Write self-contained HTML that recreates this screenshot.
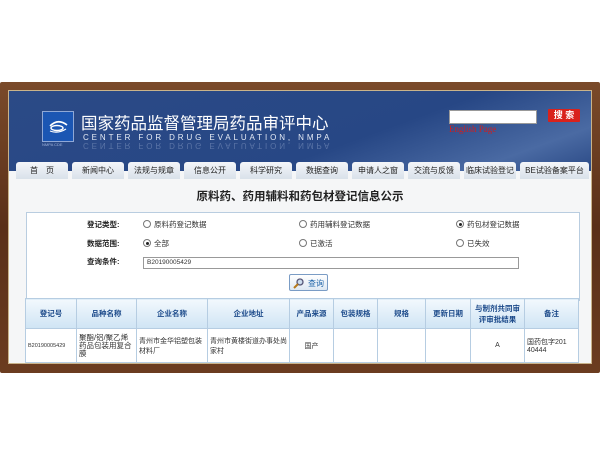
<!DOCTYPE html>
<html><head><meta charset="utf-8"><style>
body{margin:0;width:600px;height:450px;background:#fff;position:relative;overflow:hidden;font-family:"Liberation Sans","Noto Sans CJK SC",sans-serif}
.frame{position:absolute;left:0;top:82px;width:600px;height:291px;background:linear-gradient(180deg,#7a4a2a,#5a3018 50%,#6b3c20);border-radius:2px}
.inner{position:absolute;left:9px;top:91px;width:582px;height:272px;background:#f5f6f7;overflow:hidden;box-shadow:0 0 0 1px #c9b38a}
.hdr{position:absolute;left:0;top:0;width:582px;height:80px;background:linear-gradient(160deg,#2b4a86,#274785 60%,#4a6aa3 85%,#2b4a86)}
.logo{position:absolute;left:33px;top:20px;width:30px;height:29px;background:#1b56b3;border:1px solid #8fa8d6}
.t1{position:absolute;left:72px;top:19px;color:#fff;font-size:16.5px;letter-spacing:0px;white-space:nowrap}
.t2{position:absolute;left:74px;top:42px;color:#e6ecf6;font-size:8px;letter-spacing:2.9px;white-space:nowrap}
.t3{position:absolute;left:74px;top:50px;color:#6f86b4;font-size:8px;letter-spacing:2.9px;transform:scaleY(-1);opacity:.7;white-space:nowrap}
.sin{position:absolute;left:440px;top:19px;width:86px;height:12px;background:#fff;border:1px solid #999}
.sbtn{position:absolute;left:539px;top:18px;width:32px;height:13px;background:#d9221c;color:#fff;font-size:9px;text-align:center;line-height:13px;font-weight:bold;border-radius:1px}
.eng{position:absolute;left:440px;top:33px;color:#d21e1e;font-size:9px;font-family:"Liberation Serif",serif}
.tab{position:absolute;top:71px;width:52px;height:17px;background:linear-gradient(#f4f6f9,#d9e1ea);border-radius:3px 3px 0 0;font-size:8px;text-align:center;line-height:18px;color:#222}
.title{position:absolute;left:0;width:582px;top:97px;text-align:center;font-size:11.5px;font-weight:bold;color:#222}
.form{position:absolute;left:17px;top:121px;width:552px;height:87px;background:#fff;border:1px solid #b9cde0}
.lab{position:absolute;font-size:7.5px;font-weight:bold;color:#222}
.opt{position:absolute;font-size:7.5px;color:#333}
.opt i{display:inline-block;width:6px;height:6px;border:1px solid #777;border-radius:50%;vertical-align:-1px;margin-right:3px;position:relative}
.opt i.on:after{content:"";position:absolute;left:1.5px;top:1.5px;width:3px;height:3px;border-radius:50%;background:#222}
.q{position:absolute;left:116px;top:44px;width:371px;height:10px;border:1px solid #999;font-size:6.5px;line-height:10px;padding-left:3px;color:#333}
.btn{position:absolute;left:262px;top:61px;width:39px;height:17px;border:1px solid #7a9cc5;border-radius:2px;background:linear-gradient(#fff,#dde8f3);font-size:8px;color:#26a;line-height:17px;text-align:right;padding-right:3px;box-sizing:border-box}
table{position:absolute;left:16px;top:207px;border-collapse:collapse;font-size:7px;color:#333}
td{border:1px solid #b6cde2;text-align:center;padding:0 2px}
tr.h td{height:29px;background:linear-gradient(#f2f8fd,#cfe4f4);color:#1c4a8a;font-weight:bold;font-size:7.5px}
tr.r td{height:33px;background:#fff;text-align:left}
</style></head><body>
<div class="frame"></div>
<div class="inner">
 <div class="hdr">
  <div class="logo"><svg width="30" height="29"><path d="M7 14 Q15 6 24 13" stroke="#fff" stroke-width="1.6" fill="none"/><ellipse cx="14" cy="16" rx="6" ry="2.5" stroke="#fff" stroke-width="1.4" fill="none"/><path d="M7 19 Q15 22 23 17" stroke="#fff" stroke-width="1.2" fill="none"/></svg></div>
  <div style="position:absolute;left:33px;top:51px;color:#9fb3dc;font-size:4px">NMPA CDE</div>
  <div class="t1">国家药品监督管理局药品审评中心</div>
  <div class="t2">CENTER FOR DRUG EVALUATION, NMPA</div>
  <div class="t3">CENTER FOR DRUG EVALUATION, NMPA</div>
  <div class="sin"></div><div class="sbtn">搜 索</div>
  <div class="eng">English Page</div>
  <div class="tab" style="left:7px">首　页</div>
  <div class="tab" style="left:63px">新闻中心</div>
  <div class="tab" style="left:119px">法规与规章</div>
  <div class="tab" style="left:175px">信息公开</div>
  <div class="tab" style="left:231px">科学研究</div>
  <div class="tab" style="left:287px">数据查询</div>
  <div class="tab" style="left:343px">申请人之窗</div>
  <div class="tab" style="left:399px">交流与反馈</div>
  <div class="tab" style="left:455px">临床试验登记</div>
  <div class="tab" style="left:511px;width:69px">BE试验备案平台</div>
 </div>
 <div class="title">原料药、药用辅料和药包材登记信息公示</div>
 <div class="form">
  <div class="lab" style="left:60px;top:6px">登记类型:</div>
  <div class="lab" style="left:60px;top:25px">数据范围:</div>
  <div class="lab" style="left:60px;top:43px">查询条件:</div>
  <div class="opt" style="left:116px;top:6px"><i></i>原料药登记数据</div>
  <div class="opt" style="left:272px;top:6px"><i></i>药用辅料登记数据</div>
  <div class="opt" style="left:429px;top:6px"><i class="on"></i>药包材登记数据</div>
  <div class="opt" style="left:116px;top:25px"><i class="on"></i>全部</div>
  <div class="opt" style="left:272px;top:25px"><i></i>已激活</div>
  <div class="opt" style="left:429px;top:25px"><i></i>已失效</div>
  <div class="q">B20190005429</div>
  <div class="btn"><svg style="position:absolute;left:3px;top:3px" width="11" height="11"><circle cx="7" cy="4" r="3" stroke="#557" stroke-width="1.3" fill="#cde"/><path d="M5 6 L1 10" stroke="#b67a1c" stroke-width="2"/></svg>查询</div>
 </div>
 <table>
  <tr class="h"><td style="width:46px">登记号</td><td style="width:55px">品种名称</td><td style="width:66px">企业名称</td><td style="width:77px">企业地址</td><td style="width:39px">产品来源</td><td style="width:39px">包装规格</td><td style="width:43px">规格</td><td style="width:40px">更新日期</td><td style="width:49px">与制剂共同审<br>评审批结果</td><td style="width:49px">备注</td></tr>
  <tr class="r"><td style="font-size:5.5px">B20190005429</td><td style="font-size:7.5px;line-height:8px">聚酯/铝/聚乙烯药品包装用复合膜</td><td>青州市金华铝塑包装材料厂</td><td>青州市黄楼街道办事处尚家村</td><td style="text-align:center">国产</td><td></td><td></td><td></td><td style="text-align:center">A</td><td>国药包字201 40444</td></tr>
 </table>
</div>
</body></html>
